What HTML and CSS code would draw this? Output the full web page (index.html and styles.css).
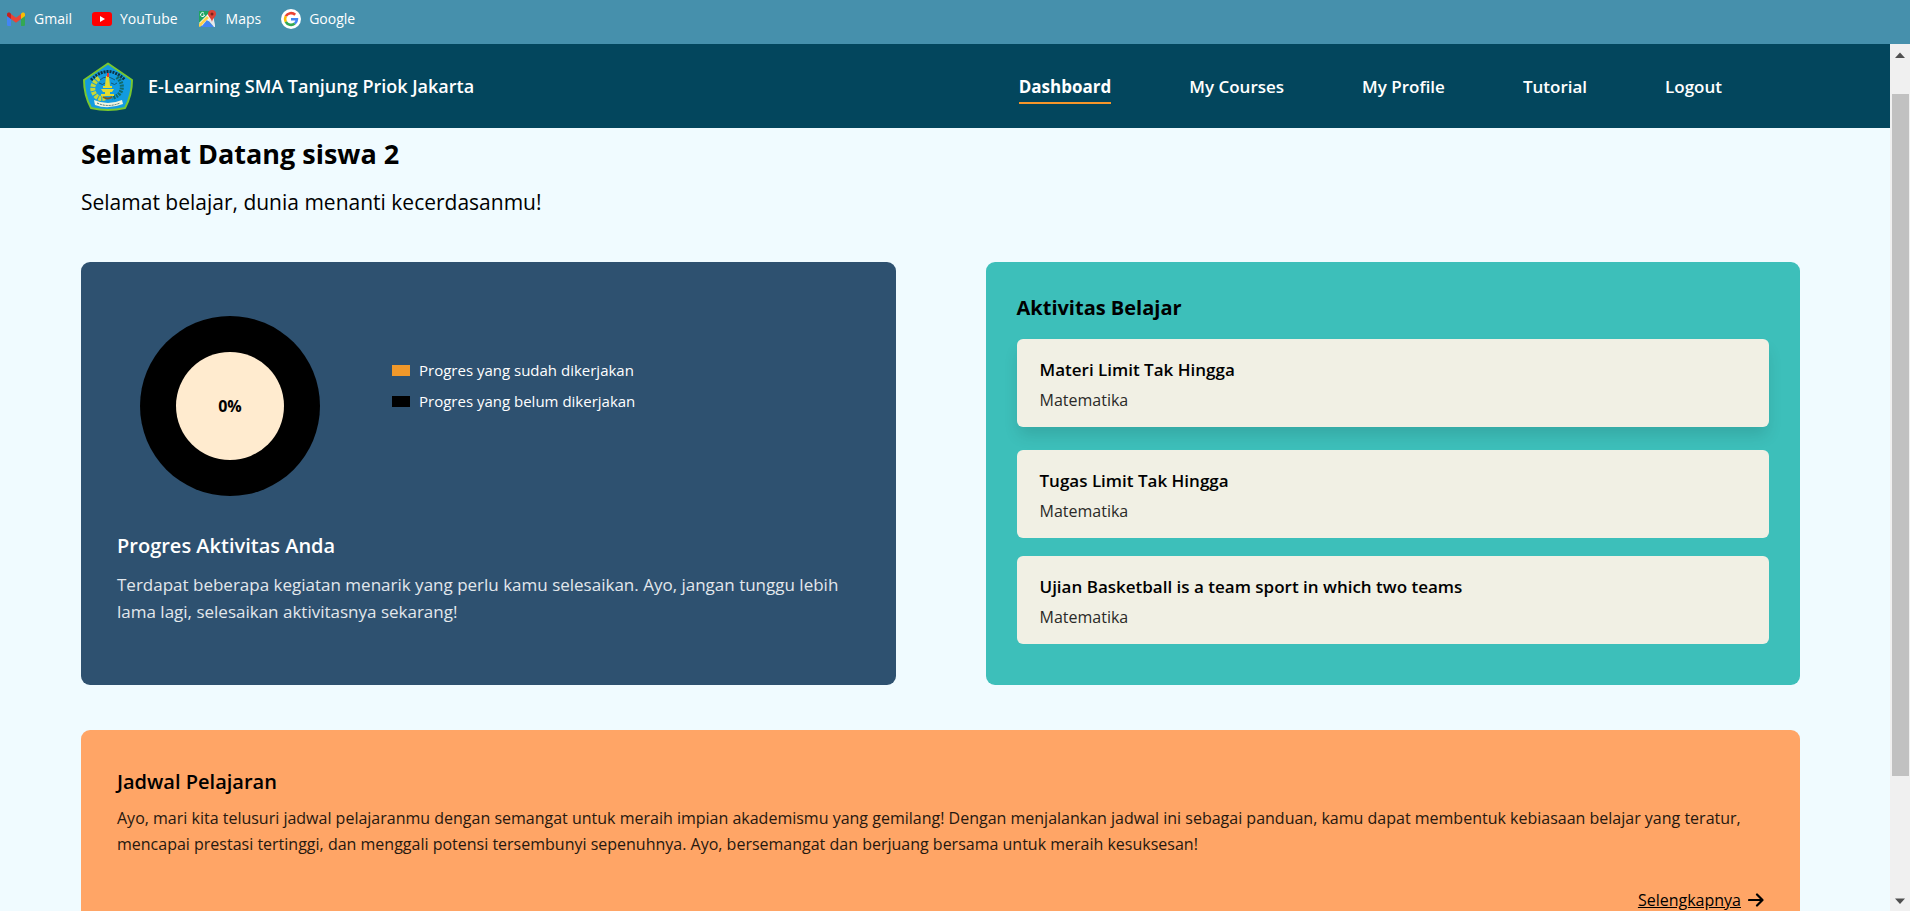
FILE: index.html
```html
<!DOCTYPE html>
<html lang="id">
<head>
<meta charset="utf-8">
<meta name="viewport" content="width=device-width, initial-scale=1">
<title>E-Learning SMA Tanjung Priok Jakarta</title>
<link rel="stylesheet" href="styles.css">
</head>
<body>
<div class="bookmarks">
  <a class="bookmark" href="#"><svg width="20" height="20" viewBox="0 0 20 20" aria-hidden="true"><path fill="#4285f4" d="M1 7l4 3v7H2.300Q1 17 1 15.700z"/><path fill="#34a853" d="M15 10l4-3v8.700Q19 17 17.700 17H15z"/><path fill="#ea4335" d="M5 5l5 3.800L15 5v5l-5 3.800L5 10z"/><path fill="#c5221f" d="M1 5.500C1 3.500 3 3 4.200 4L5 4.800V10L1 7z"/><path fill="#fbbc04" d="M19 5.500C19 3.500 17 3 15.800 4l-.8.8V10l4-3z"/></svg>Gmail</a>
  <a class="bookmark" href="#"><svg width="20" height="20" viewBox="0 0 20 20" aria-hidden="true"><rect y="3" width="20" height="14" rx="3" fill="#f00"/><path d="M8 7l5 3-5 3z" fill="#fff"/></svg>YouTube</a>
  <a class="bookmark" href="#"><svg width="20" height="20" viewBox="0 0 20 20" aria-hidden="true"><path fill="#1fa463" d="M1 2h13L1 16z"/><path fill="#fff" d="M1 14L13 2l4 3L5 18z"/><path fill="#ffd04b" d="M1 15l8-8 2 2-9 9q-1 0-1-1z"/><path fill="#4285f4" d="M3 18l6-7 7 7z"/><path fill="#e8eaed" d="M10 11l5-5 2 10v2h-1z"/><path fill="#1fa463" d="M1 3q0-1 1-1h9L1 12z"/><path fill="#db4437" d="M14 1a4 4 0 0 1 4 4c0 3-3.500 4-4 8-.5-4-4-5-4-8a4 4 0 0 1 4-4z"/><circle cx="14" cy="5" r="1.500" fill="#7b231b"/><path d="M6 4.200A2 2 0 1 0 6.500 6H5" fill="none" stroke="#fff"/></svg>Maps</a>
  <a class="bookmark" href="#"><svg width="20" height="20" viewBox="0 0 20 20" aria-hidden="true"><circle cx="10" cy="10" r="10" fill="#fff"/><g fill="none" stroke-width="2.600"><path stroke="#ea4335" d="M4.800 7.200A6 6 0 0 1 14.200 5.800"/><path stroke="#fbbc05" d="M4.800 7.200a6 6 0 0 0 0 5.600"/><path stroke="#34a853" d="M4.800 12.800a6 6 0 0 0 9 1.800"/><path stroke="#4285f4" d="M13.800 14.600A6 6 0 0 0 15.900 10.200H10"/></g></svg>Google</a>
</div>

<div class="viewport">
  <div class="page">
    <header class="header">
      <a class="brand" href="#">
        <svg width="52" height="52" viewBox="0 0 52 52" aria-hidden="true">
          <path d="M26 3.500L50 20Q50 35 43 48Q26 52 9 48Q2 35 2 20z" fill="#129be0" stroke="#78c72f" stroke-width="2" stroke-linejoin="round"/>
          <path d="M9 20Q26 3 43 20" fill="none" stroke="#0d3345" stroke-width="3" stroke-dasharray="2 1"/>
          <path d="M17 18Q7 26 13 35Q17 40 23 38" fill="none" stroke="#c8d836" stroke-width="5" stroke-dasharray="3 1"/>
          <path d="M35 17Q42 24 39 31Q37 36 30 38" fill="none" stroke="#126b68" stroke-width="4" stroke-dasharray="2 1"/>
          <path d="M18 20q6-6 15 0M17 23q4 3 6 0m6 0q4 3 6 0" fill="none" stroke="#155875"/>
          <path d="M24 16h3l1 10h2v2H21v-2h2zM19 29h13l-2 3h-2v2h4v2H19v-2h4v-2h-2z" fill="#e1dc32"/>
          <path d="M25 13h2v4h-2z" fill="#e33934"/>
          <path d="M21 37q5 3 9 0" fill="none" stroke="#80591f" stroke-width="2"/>
          <path d="M12 40Q26 46 40 40L41 44Q26 50 13 45z" fill="#f2f5df"/>
          <path d="M15 43Q26 48 38 43" fill="none" stroke="#426d70" stroke-dasharray="2 1"/>
        </svg>
        <span>E-Learning SMA Tanjung Priok Jakarta</span>
      </a>
      <nav class="nav">
        <a class="nav-link nav-link-active" href="#">Dashboard</a>
        <a class="nav-link" href="#">My Courses</a>
        <a class="nav-link" href="#">My Profile</a>
        <a class="nav-link" href="#">Tutorial</a>
        <a class="nav-link" href="#">Logout</a>
      </nav>
    </header>

    <main class="main">
      <h1 class="welcome">Selamat Datang siswa 2</h1>
      <p class="tagline">Selamat belajar, dunia menanti kecerdasanmu!</p>

      <div class="cards">
        <section class="card progress">
          <div class="chart-row">
            <div class="ring"><div class="ring-hole">0%</div></div>
            <ul class="legend">
              <li class="legend-item"><span class="swatch swatch-done"></span>Progres yang sudah dikerjakan</li>
              <li class="legend-item"><span class="swatch"></span>Progres yang belum dikerjakan</li>
            </ul>
          </div>
          <h2 class="progress-title">Progres Aktivitas Anda</h2>
          <p class="progress-text">Terdapat beberapa kegiatan menarik yang perlu kamu selesaikan. Ayo, jangan tunggu lebih lama lagi, selesaikan aktivitasnya sekarang!</p>
        </section>

        <section class="card activities">
          <h2 class="activities-title">Aktivitas Belajar</h2>
          <div class="activity-list">
            <a class="activity activity-raised" href="#"><h3 class="activity-name">Materi Limit Tak Hingga</h3><p class="activity-subject">Matematika</p></a>
            <a class="activity" href="#"><h3 class="activity-name">Tugas Limit Tak Hingga</h3><p class="activity-subject">Matematika</p></a>
            <a class="activity" href="#"><h3 class="activity-name">Ujian Basketball is a team sport in which two teams</h3><p class="activity-subject">Matematika</p></a>
          </div>
        </section>
      </div>

      <section class="card schedule">
        <h2 class="schedule-title">Jadwal Pelajaran</h2>
        <p class="schedule-text">Ayo, mari kita telusuri jadwal pelajaranmu dengan semangat untuk meraih impian akademismu yang gemilang! Dengan menjalankan jadwal ini sebagai panduan, kamu dapat membentuk kebiasaan belajar yang teratur, mencapai prestasi tertinggi, dan menggali potensi tersembunyi sepenuhnya. Ayo, bersemangat dan berjuang bersama untuk meraih kesuksesan!</p>
        <a class="more" href="#"><span class="more-label">Selengkapnya</span><svg width="16" height="14" viewBox="0 0 16 14" aria-hidden="true"><path d="M1 7h13M9 1.500L14.500 7 9 12.500" fill="none" stroke="#000" stroke-width="2.200" stroke-linecap="round" stroke-linejoin="round"/></svg></a>
      </section>
    </main>
  </div>

  <div class="scrollbar" aria-hidden="true">
    <svg class="scroll-arrow" width="20" height="20" viewBox="0 0 20 20"><path d="M5 14l5-5.500 5 5.500z" fill="#505050"/></svg>
    <div class="scroll-track"><div class="scroll-thumb"></div></div>
    <svg class="scroll-arrow" width="20" height="20" viewBox="0 0 20 20"><path d="M5 7.500l5 5.500 5-5.500z" fill="#505050"/></svg>
  </div>
</div>
</body>
</html>
```

FILE: styles.css
```css
* {
  box-sizing: border-box;
}

body {
  display: flex;
  flex-direction: column;
  height: 100vh;
  margin: 0;
  overflow: hidden;
  background: #f0fbff;
  color: #000;
  font-family: "Open Sans", "Noto Sans", sans-serif;
}

h1, h2, h3, p, ul {
  margin: 0;
  padding: 0;
}

a {
  color: inherit;
  text-decoration: none;
}

.bookmarks {
  display: flex;
  flex: none;
  gap: 20px;
  height: 44px;
  padding: 0 6px 7px;
  background: #4690ac;
  color: #fff;
}

.bookmark {
  display: flex;
  align-items: center;
  gap: 8px;
  font-size: 14px;
}

.viewport {
  display: flex;
  flex: 1;
  min-height: 0;
}

.page {
  flex: 1;
  min-width: 0;
  overflow: hidden;
}

.header {
  display: flex;
  align-items: center;
  justify-content: space-between;
  height: 84px;
  padding: 0 168px 0 82px;
  background: #03465d;
  color: #fff;
}

.brand {
  display: flex;
  align-items: center;
  gap: 14px;
  font-size: 18px;
  font-weight: 600;
}

.nav {
  display: flex;
  gap: 78px;
}

.nav-link {
  padding: 7px 0 3px;
  border-bottom: 2px solid transparent;
  font-size: 17px;
  font-weight: 600;
  line-height: 24px;
}

.nav-link-active {
  border-color: #f7962a;
  font-weight: 700;
}

.main {
  padding: 8px 90px 0 81px;
}

.welcome {
  font-size: 27px;
  font-weight: 700;
  line-height: 36px;
}

.tagline {
  margin-top: 16px;
  font-size: 21px;
  line-height: 28px;
}

.cards {
  display: grid;
  grid-template-columns: 1fr 1fr;
  gap: 90px;
  margin-top: 46px;
}

.card {
  border-radius: 9px;
}

.progress {
  padding: 54px 36px;
  background: #2e5170;
  color: #fff;
}

.chart-row {
  display: flex;
  gap: 72px;
  padding-left: 23px;
}

.ring {
  display: grid;
  flex: none;
  place-items: center;
  width: 180px;
  height: 180px;
  border-radius: 50%;
  background: #000;
}

.ring-hole {
  display: grid;
  place-items: center;
  width: 108px;
  height: 108px;
  border-radius: 50%;
  background: #ffebcf;
  color: #000;
  font-size: 16px;
  font-weight: 700;
}

.legend {
  padding-top: 42px;
  list-style: none;
}

.legend-item {
  display: flex;
  align-items: center;
  gap: 9px;
  height: 24px;
  margin-bottom: 7px;
  font-size: 15px;
}

.swatch {
  width: 18px;
  height: 11px;
  background: #000;
}

.swatch-done {
  background: #f0982a;
}

.progress-title {
  margin-top: 36px;
  font-size: 20px;
  font-weight: 600;
  line-height: 28px;
}

.progress-text {
  margin-top: 11px;
  color: #e2e7ec;
  font-size: 17px;
  line-height: 27px;
}

.activities {
  padding: 32px 31px 41px;
  background: #3dbfba;
}

.activities-title {
  font-size: 20px;
  font-weight: 700;
  line-height: 28px;
}

.activity-list {
  display: grid;
  gap: 18px;
  margin-top: 22px;
}

.activity {
  height: 88px;
  padding: 19px 23px;
  border-radius: 6px;
  background: #f1f0e4;
}

.activity-raised {
  box-shadow: 0 10px 16px -2px rgba(0, 0, 0, 0.12);
  transform: translateY(-5px);
}

.activity-name {
  font-size: 17px;
  font-weight: 600;
  line-height: 24px;
}

.activity-subject {
  margin-top: 6px;
  color: #2a2a28;
  font-size: 16px;
  line-height: 24px;
}

.schedule {
  display: flex;
  flex-direction: column;
  margin-top: 45px;
  padding: 38px 36px;
  background: #ffa566;
}

.schedule-title {
  font-size: 20px;
  font-weight: 600;
  line-height: 28px;
}

.schedule-text {
  margin-top: 9px;
  color: #26180f;
  font-size: 16px;
  line-height: 26px;
}

.more {
  display: flex;
  align-items: center;
  align-self: flex-end;
  gap: 7px;
  margin-top: 31px;
  font-size: 16px;
  line-height: 24px;
}

.more-label {
  text-decoration: underline;
}

.scrollbar {
  display: flex;
  flex: none;
  flex-direction: column;
  width: 20px;
  background: #f0f0f0;
}

.scroll-arrow {
  flex: none;
}

.scroll-track {
  flex: 1;
  padding: 30px 1px 0 2px;
}

.scroll-thumb {
  height: 85.6%;
  background: #c1c1c1;
}
```
